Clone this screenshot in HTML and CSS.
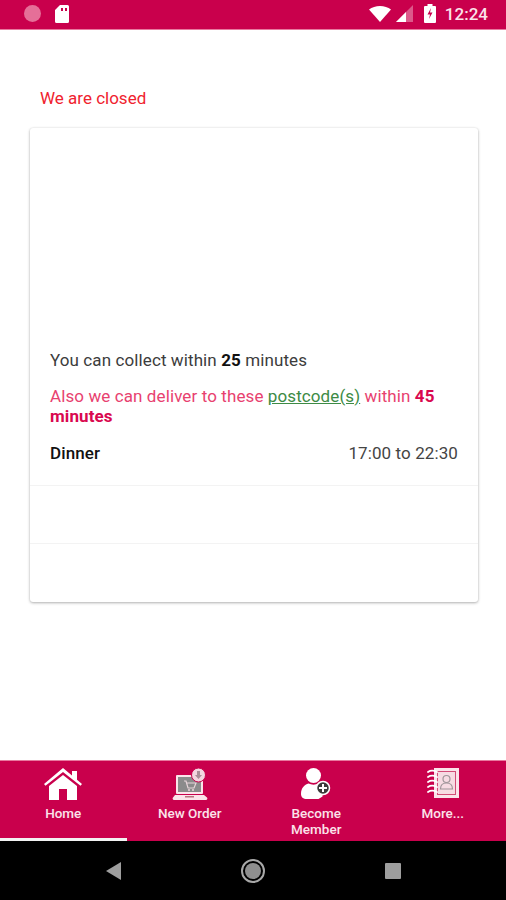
FILE: index.html
```html
<!DOCTYPE html>
<html lang="en">
<head>
    <meta charset="UTF-8">
    <meta name="viewport" content="width=device-width, initial-scale=1.0">
    <title>We are closed</title>
    <link rel="stylesheet" href="styles.css">
</head>
<body>
    <div class="app">
        <!-- Status bar -->
        <div class="status-bar">
            <div class="status-left">
                <span class="status-dot"></span>
                <svg class="status-sd" width="14" height="18" viewBox="0 0 14 18">
                    <path fill="#fff" d="M5 0h7.500A1.500 1.500 0 0 1 14 1.500v15a1.500 1.500 0 0 1-1.500 1.500h-11A1.500 1.500 0 0 1 0 16.500V5z"/>
                    <rect x="6" y="3" width="2" height="3" fill="#c9004c"/>
                    <rect x="10" y="3" width="2" height="3" fill="#c9004c"/>
                </svg>
            </div>
            <div class="status-right">
                <svg width="22" height="16" viewBox="0 0 22 16"><path fill="#fff" d="M0 3.500C3 1.200 6.800 0 11 0s8 1.200 11 3.500L11 16z"/></svg>
                <svg width="17" height="17" viewBox="0 0 17 17">
                    <path fill="#fff" fill-opacity=".35" d="M17 0v17H0z"/>
                    <path fill="#fff" d="M10 7v10H0z"/>
                </svg>
                <svg class="status-battery" width="12" height="19" viewBox="0 0 12 19">
                    <path fill="#fff" d="M3.500 0h5v2H11a1 1 0 0 1 1 1v15a1 1 0 0 1-1 1H1a1 1 0 0 1-1-1V3a1 1 0 0 1 1-1h2.500z"/>
                    <path fill="#c9004c" d="M7 4 3.500 10.500H6L5 15l3.500-6.500H6z"/>
                </svg>
                <span class="status-time">12:24</span>
            </div>
        </div>

        <!-- Main content -->
        <div class="content">
            <p class="closed-text">We are closed</p>
            <div class="card">
                <div class="card-info">
                    <p class="collect-text">You can collect within <b>25</b> minutes</p>
                    <p class="deliver-text">Also we can deliver to these <a href="#" class="postcode-link">postcode(s)</a> within <b>45 minutes</b></p>
                    <div class="hours-row">
                        <span class="hours-name">Dinner</span>
                        <span class="hours-time">17:00 to 22:30</span>
                    </div>
                </div>
                <div class="card-row"></div>
                <div class="card-row"></div>
            </div>
        </div>

        <!-- Bottom tabs -->
        <div class="tabs">
            <div class="tab tab-active">
                <svg class="tab-icon" width="38" height="32" viewBox="0 0 38 32">
                    <path fill="#fff" d="M19 0 28 7.500V3h5v8.700l5 4.300-1.500 1.800L19 4 1.500 17.800 0 16z"/>
                    <path fill="#fff" d="M19 7 33 18v14H23V21h-8v11H5V18z"/>
                </svg>
                <span class="tab-label">Home</span>
            </div>
            <div class="tab">
                <svg class="tab-icon" width="36" height="32" viewBox="0 0 36 32">
                    <rect x="4" y="7" width="27" height="19" rx="1" fill="#fbe3ea"/>
                    <rect x="6" y="9" width="23" height="15" fill="#8b8b8b"/>
                    <path fill="none" stroke="#e8d5da" stroke-width="1.200" d="M12 13h2l2 7h6l2-5H15"/>
                    <circle cx="17" cy="22" r="1" fill="#e8d5da"/>
                    <circle cx="21" cy="22" r="1" fill="#e8d5da"/>
                    <path fill="#fbe3ea" d="M3 27h29l3 2.500a1.500 1.500 0 0 1-1 2.500H2a1.500 1.500 0 0 1-1-2.500z"/>
                    <rect x="13" y="28" width="9" height="1.500" fill="#b9737f"/>
                    <circle cx="26.500" cy="7" r="7" fill="#f3d6df" stroke="#c9004c"/>
                    <path fill="#a98f97" d="M25 3h3v4h2l-3.500 4L23 7h2z"/>
                </svg>
                <span class="tab-label">New Order</span>
            </div>
            <div class="tab">
                <svg class="tab-icon tab-icon-member" width="30" height="32" viewBox="0 0 30 32">
                    <circle cx="12.500" cy="7.500" r="7.500" fill="#fff"/>
                    <path fill="#fff" d="M0 26c0-6 3.500-9.500 7.500-10.500 3 1.500 7 1.500 10 0 2 .5 4 1.500 5 3l-1 10-4 2.500H6c-4 0-6-2-6-5z"/>
                    <circle cx="22" cy="20" r="6.500" fill="#3a3a3a" stroke="#fff" stroke-width="1.500"/>
                    <path fill="#fff" d="M21 16h2v3h3v2h-3v3h-2v-3h-3v-2h3z"/>
                </svg>
                <span class="tab-label">Become<br>Member</span>
            </div>
            <div class="tab">
                <svg class="tab-icon" width="32" height="32" viewBox="0 0 32 32">
                    <rect x="7" y="0" width="25" height="30" fill="#fbe3ea"/>
                    <rect x="10" y="3" width="19" height="24" fill="#d24d78"/>
                    <rect x="11" y="4" width="17" height="22" fill="#f7dbe3"/>
                    <circle cx="19.500" cy="11" r="3.500" fill="none" stroke="#a0969a" stroke-width="1.200"/>
                    <path fill="none" stroke="#a0969a" stroke-width="1.200" d="M13.500 21c0-4 2.500-6 6-6s6 2 6 6z"/>
                    <path fill="none" stroke="#fff" stroke-width="1.800" stroke-linecap="round" d="M1 4c3-2 7-1 9 0M1 9c3-2 7-1 9 0M1 14c3-2 7-1 9 0M1 19c3-2 7-1 9 0M1 24c3-2 7-1 9 0"/>
                </svg>
                <span class="tab-label">More...</span>
            </div>
        </div>

        <!-- Android nav bar -->
        <div class="nav-bar">
            <span class="nav-back"></span>
            <span class="nav-home"><span class="nav-home-inner"></span></span>
            <span class="nav-recent"></span>
        </div>
    </div>
</body>
</html>
```
FILE: styles.css
```css
* {
    box-sizing: border-box;
}
body {
    margin: 0;
    font-family: Roboto, "Liberation Sans", sans-serif;
    background-color: white;
}
.app {
    width: 506px;
    height: 900px;
    display: flex;
    flex-direction: column;
    overflow: hidden;
}
.status-bar {
    height: 30px;
    flex: none;
    background: #c9004c;
    border-bottom: 1px solid #e8799f;
    display: flex;
    justify-content: space-between;
    align-items: center;
    padding: 0 18px 2px 24px;
}
.status-left, .status-right {
    display: flex;
    align-items: center;
}
.status-dot {
    width: 17px;
    height: 17px;
    border-radius: 50%;
    background: #e56f98;
    margin-right: 14px;
}
.status-right svg {
    margin-right: 5px;
}
.status-right .status-battery {
    margin: 0 9px 0 6px;
}
.status-time {
    color: #fbe3ea;
    font-size: 17px;
    font-weight: 500;
}
.content {
    flex: 1;
    padding: 0 28px 0 30px;
}
.closed-text {
    margin: 59px 0 0 10px;
    color: #f0222e;
    font-size: 17px;
    line-height: 19px;
}
.card {
    margin-top: 20px;
    height: 474px;
    background: white;
    border-radius: 3px;
    box-shadow: 0 1px 3px rgba(0,0,0,0.3), 0 0 2px rgba(0,0,0,0.08);
    display: flex;
    flex-direction: column;
}
.card-info {
    height: 357px;
    padding: 222px 20px 0 20px;
    font-size: 17px;
    letter-spacing: 0.1px;
}
.card-info p {
    margin: 0;
    line-height: 20px;
}
.collect-text {
    color: #3c3c3c;
}
.collect-text b {
    color: #111;
    font-weight: 700;
}
.deliver-text {
    color: #e8416f;
    padding-top: 16px;
}
.deliver-text b {
    color: #d9084f;
    font-weight: 700;
}
.postcode-link {
    color: #3d8b45;
    text-decoration: underline;
}
.hours-row {
    display: flex;
    justify-content: space-between;
    margin-top: 17px;
    line-height: 20px;
}
.hours-name {
    color: #111;
    font-weight: 500;
}
.hours-time {
    color: #444;
}
.card-row {
    height: 58px;
    border-top: 1px solid #f3f3f3;
}
.tabs {
    height: 81px;
    flex: none;
    background: #c9004c;
    border-top: 1px solid #e8799f;
    display: flex;
}
.tab {
    flex: 1;
    display: flex;
    flex-direction: column;
    align-items: center;
    padding-top: 7px;
    color: #fbe3ea;
    font-size: 13.5px;
    font-weight: 500;
    text-align: center;
}
.tab-active {
    border-bottom: 3px solid #f2f2f2;
}
.tab-icon {
    flex: none;
}
.tab-label {
    margin-top: 5px;
    line-height: 16px;
}
.nav-bar {
    height: 59px;
    flex: none;
    background: black;
    display: flex;
    align-items: center;
}
.nav-back {
    margin-left: 106px;
    width: 0;
    height: 0;
    border-style: solid;
    border-width: 9px 15px 9px 0;
    border-color: transparent #9e9e9e transparent transparent;
}
.nav-home {
    margin-left: 120px;
    width: 24px;
    height: 24px;
    border-radius: 50%;
    border: 2px solid #a8a8a8;
    display: flex;
    align-items: center;
    justify-content: center;
}
.nav-home-inner {
    width: 16px;
    height: 16px;
    border-radius: 50%;
    background: #8f8f8f;
}
.nav-recent {
    margin-left: 120px;
    width: 16px;
    height: 16px;
    border-radius: 1px;
    background: #9e9e9e;
}
```
